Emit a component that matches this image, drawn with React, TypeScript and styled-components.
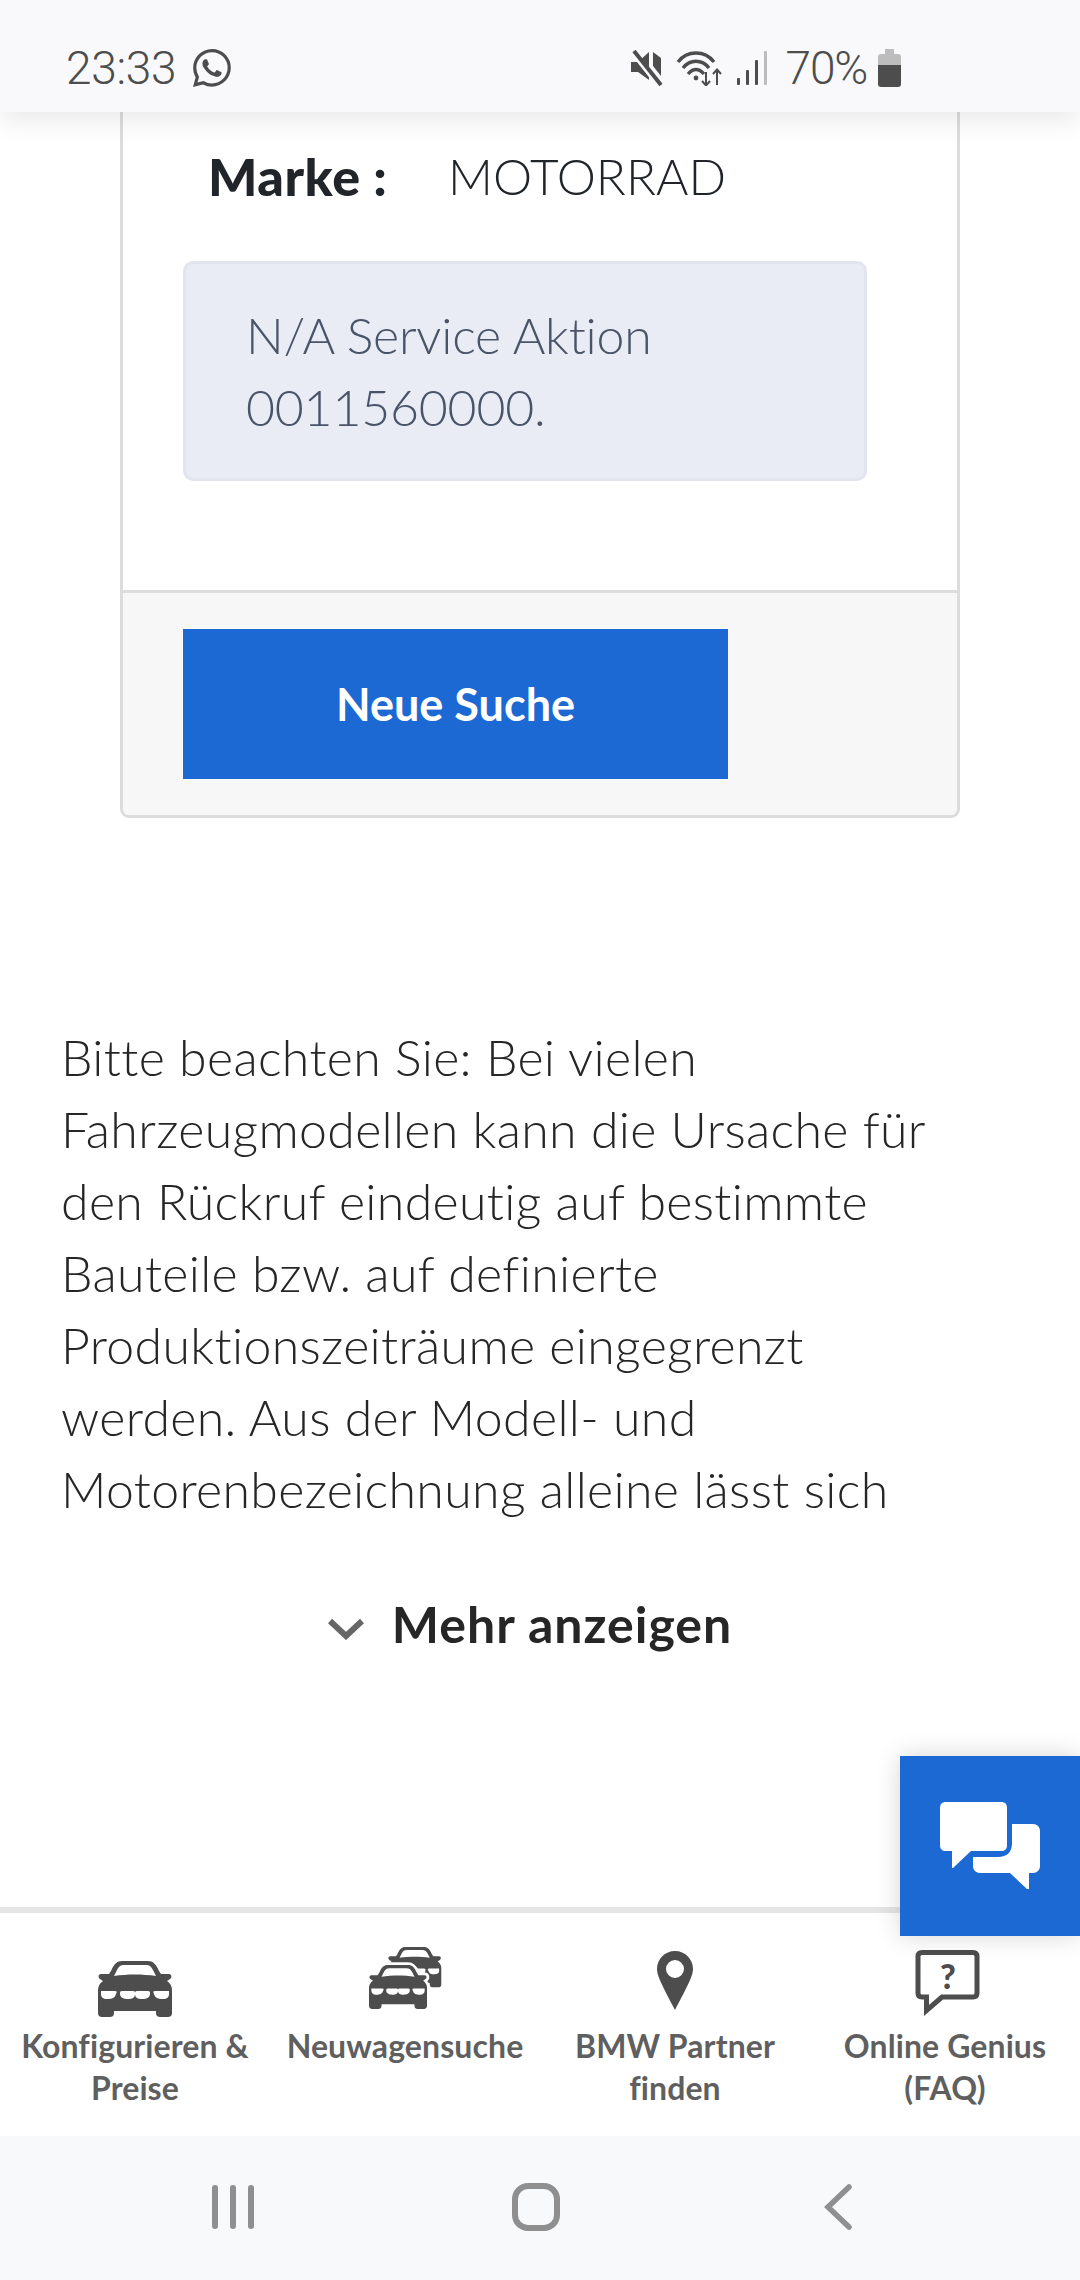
import React from 'react';
import styled, { createGlobalStyle } from 'styled-components';
import { BsWhatsapp } from 'react-icons/bs';

const GlobalStyle = createGlobalStyle`
  * { box-sizing: border-box; }
  html, body { margin: 0; padding: 0; background: #ffffff; }
  body { font-family: Lato, "Noto Sans", sans-serif; color: #212529; }
`;

const Page = styled.div`
  position: relative;
  display: flex;
  flex-direction: column;
  width: 1080px;
  height: 2280px;
  overflow: hidden;
`;

const StatusBar = styled.header`
  position: relative;
  z-index: 2;
  display: flex;
  align-items: center;
  flex: none;
  height: 112px;
  padding: 23px 179px 0 66px;
  background: #f9f9fb;
  color: #4d4d4d;
  box-shadow: 0 6px 28px rgba(0, 0, 0, 0.1);
`;

const StatusText = styled.span`
  font-family: Roboto, sans-serif;
  font-size: 46px;
  font-weight: 300;
  line-height: 44px;
  letter-spacing: -0.3px;
`;

const StatusGroup = styled.div`
  display: flex;
  align-items: center;
  gap: 11px;

  ${StatusText} {
    margin-left: 8px;
    letter-spacing: -1.2px;
  }
`;

const Whatsapp = styled(BsWhatsapp)`
  margin-left: 17px;
  font-size: 38px;
`;

const Spacer = styled.div`
  flex: 1;
`;

const Main = styled.main`
  flex: 1;
  display: flex;
  flex-direction: column;
  min-height: 0;
`;

const Card = styled.section`
  margin: 0 120px;
  border: 3px solid #dcdcdc;
  border-top: 0;
  border-radius: 0 0 9px 9px;
  overflow: hidden;
`;

const CardBody = styled.div`
  height: 478px;
  padding: 30px 60px 0;
`;

const BrandRow = styled.div`
  display: flex;
  align-items: center;
  height: 68px;
  padding-left: 25px;
`;

const BrandLabel = styled.strong`
  width: 240px;
  font-size: 52px;
  font-weight: 900;
  letter-spacing: 0.5px;
  white-space: nowrap;
`;

const BrandValue = styled.span`
  font-size: 49.5px;
  font-weight: 300;
  white-space: nowrap;
`;

const Notice = styled.div`
  width: 684px;
  height: 220px;
  margin-top: 51px;
  padding: 35px 60px 0;
  border: 3px solid #e2e5ef;
  border-radius: 10px;
  background: #e9ecf4;
  color: #4a5468;
  font-size: 50px;
  font-weight: 300;
  letter-spacing: -0.2px;
  line-height: 72px;
`;

const CardFooter = styled.div`
  height: 225px;
  padding: 36px 60px 0;
  border-top: 3px solid #dcdcdc;
  background: #f7f7f7;
`;

const SearchButton = styled.button`
  display: block;
  width: 545px;
  height: 150px;
  padding: 0;
  border: 0;
  background: #1d69d3;
  color: #ffffff;
  font-family: inherit;
  font-size: 45px;
  font-weight: 700;
`;

const Copy = styled.p`
  width: 960px;
  margin: 203px 0 0;
  padding-left: 61px;
  color: #262626;
  font-size: 50px;
  font-weight: 300;
  letter-spacing: 0.35px;
  line-height: 72px;
`;

const MoreRow = styled.div`
  display: flex;
  align-items: center;
  justify-content: center;
  gap: 28px;
  margin-top: 63px;
  padding-right: 20px;
  color: #262626;
  font-size: 50px;
  font-weight: 700;
  letter-spacing: 1px;
  line-height: 72px;

  svg {
    margin-top: 9px;
  }
`;

const BottomNav = styled.nav`
  display: grid;
  grid-template-columns: repeat(4, 270px);
  flex: none;
  height: 229px;
  padding-top: 27px;
  border-top: 6px solid #e5e5e5;
  background: #ffffff;
`;

const NavItem = styled.a`
  display: flex;
  flex-direction: column;
  align-items: center;
`;

const NavIcon = styled.svg`
  display: block;
  width: 100px;
  height: 84px;
  margin-bottom: 1px;
  color: #4d4d4d;
`;

const NavLabel = styled.span`
  color: #5f5f5f;
  font-size: 32px;
  font-weight: 700;
  letter-spacing: 0.1px;
  line-height: 42px;
  text-align: center;
  white-space: pre-line;
`;

const SystemBar = styled.footer`
  display: flex;
  align-items: center;
  justify-content: center;
  flex: none;
  height: 144px;
  padding: 0 8px 2px 0;
  background: #f8f9fb;
  color: #8f8f8f;
`;

const SystemKey = styled.div`
  display: flex;
  align-items: center;
  justify-content: center;
  width: 302px;
`;

const ChatButton = styled.button`
  position: absolute;
  right: 0;
  bottom: 344px;
  z-index: 1;
  display: flex;
  align-items: center;
  justify-content: center;
  width: 180px;
  height: 180px;
  padding: 0;
  border: 0;
  background: #1d69d3;
  box-shadow: 0 0 24px rgba(0, 0, 0, 0.16);
`;

const carBody =
  'M24 0H50C55 0 58 3 61 10L63 13H71C74 13 74 17 72 18L69 20C72 22 74 25 74 29V52C74 55 72 56 70 56H62C60 56 58 55 58 52V50H16V52C16 55 14 56 12 56H4C2 56 0 55 0 52V29C0 25 2 22 5 20L2 18C0 17 0 13 3 13H11L13 10C16 3 19 0 24 0Z';

const CarShape = () => (
  <>
    <path fill="currentColor" d={carBody} />
    <path fill="#fff" d="M16 15L19 9C21 5 23 4 26 4H48C51 4 53 5 55 9L58 15C45 13 29 13 16 15Z" />
    <path fill="#fff" d="M3 30H17C19 30 19 31 18 33C17 37 14 38 9 38C5 38 3 36 3 33Z" />
    <path fill="#fff" d="M71 30H57C55 30 55 31 56 33C57 37 60 38 65 38C69 38 71 36 71 33Z" />
    <path fill="#fff" d="M24 30H35C37 30 37 31 37 33C37 37 34 38 30 38C25 38 22 36 22 33C22 31 22 30 24 30Z" />
    <path fill="#fff" d="M50 30H39C37 30 37 31 37 33C37 37 40 38 44 38C49 38 52 36 52 33C52 31 52 30 50 30Z" />
  </>
);

const SingleCarIcon = () => (
  <NavIcon viewBox="0 0 100 84">
    <g transform="translate(13 21)">
      <CarShape />
    </g>
  </NavIcon>
);

const TwoCarsIcon = () => (
  <NavIcon viewBox="0 0 100 84">
    <g transform="translate(33 7) scale(0.72)">
      <CarShape />
    </g>
    <g transform="translate(14 25) scale(0.784)">
      <path d={carBody} fill="#fff" stroke="#fff" strokeWidth="7" />
      <CarShape />
    </g>
  </NavIcon>
);

const PinIcon = () => (
  <NavIcon viewBox="0 0 100 84">
    <path
      fill="currentColor"
      fillRule="evenodd"
      d="M50 11C60 11 68 19 68 29C68 36 62 47 50 70C38 47 32 36 32 29C32 19 40 11 50 11ZM50 20A9 9 0 1 0 50 38A9 9 0 1 0 50 20Z"
    />
  </NavIcon>
);

const FaqIcon = () => (
  <NavIcon viewBox="0 0 100 84">
    <path
      fill="none"
      stroke="currentColor"
      strokeWidth="5"
      d="M27 12.5H78C80.500 12.500 82 14 82 16.500V53C82 55.500 80.500 57 78 57H47L31.500 70.500V57H27C24.500 57 23 55.500 23 53V16.500C23 14 24.500 12.500 27 12.500Z"
    />
    <text x="53" y="49" textAnchor="middle" fill="currentColor" fontFamily="Lato, sans-serif" fontSize="34" fontWeight="900">
      ?
    </text>
  </NavIcon>
);

const navItems = [
  { label: 'Konfigurieren &\nPreise', icon: <SingleCarIcon /> },
  { label: 'Neuwagensuche', icon: <TwoCarsIcon /> },
  { label: 'BMW Partner\nfinden', icon: <PinIcon /> },
  { label: 'Online Genius\n(FAQ)', icon: <FaqIcon /> },
];

export default function App() {
  return (
    <Page>
      <GlobalStyle />
      <StatusBar>
        <StatusText>23:33</StatusText>
        <Whatsapp />
        <Spacer />
        <StatusGroup>
          <svg width="36" height="36" viewBox="0 0 36 36" fill="#4d4d4d">
            <path d="M2 12H9L20 2V30L9 22H2Z" />
            <path d="M3 1L30 35" stroke="#f9f9fb" strokeWidth="6" />
            <path d="M5 1L32 35" stroke="#4d4d4d" strokeWidth="4" />
            <path d="M24 2V16L32 26V8Z" />
          </svg>
          <svg width="48" height="36" viewBox="0 0 48 36" fill="none" stroke="#4d4d4d" strokeWidth="3.4">
            <path d="M2 12C11 0 29 0 38 12" />
            <path d="M7 18C14 9 26 9 33 18" />
            <path d="M12 24C17 18 23 18 28 24" />
            <circle cx="20" cy="28" r="2.400" fill="#4d4d4d" stroke="none" />
            <path d="M30 22V35M26 31L30 35.500L34 31" strokeWidth="2" />
            <path d="M41 35V20M37 24L41 19.500L45 24" strokeWidth="2" />
          </svg>
          <svg width="32" height="36" viewBox="0 0 32 36">
            <rect x="2" y="28" width="3" height="7" rx="1" fill="#4d4d4d" />
            <rect x="11" y="20" width="3" height="15" rx="1" fill="#4d4d4d" />
            <rect x="20" y="10" width="3" height="25" rx="1" fill="#4d4d4d" />
            <rect x="29" y="1" width="3" height="34" rx="1" fill="#bdbdbd" />
          </svg>
          <StatusText>70%</StatusText>
          <svg width="23" height="38" viewBox="0 0 23 38">
            <path fill="#bdbdbd" d="M7 0H16V5H20C22 5 23 6 23 8V16H0V8C0 6 1 5 3 5H7Z" />
            <path fill="#4d4d4d" d="M0 16H23V35C23 37 22 38 20 38H3C1 38 0 37 0 35Z" />
          </svg>
        </StatusGroup>
      </StatusBar>
      <Main>
        <Card>
          <CardBody>
            <BrandRow>
              <BrandLabel>Marke :</BrandLabel>
              <BrandValue>MOTORRAD</BrandValue>
            </BrandRow>
            <Notice>N/A Service Aktion 0011560000.</Notice>
          </CardBody>
          <CardFooter>
            <SearchButton>Neue Suche</SearchButton>
          </CardFooter>
        </Card>
        <Copy>
          Bitte beachten Sie: Bei vielen Fahrzeugmodellen kann die Ursache für den Rückruf eindeutig auf bestimmte
          Bauteile bzw. auf definierte Produktionszeiträume eingegrenzt werden. Aus der Modell- und
          Motorenbezeichnung alleine lässt sich
        </Copy>
        <MoreRow>
          <svg width="36" height="22" viewBox="0 0 36 22" fill="none" stroke="#666666" strokeWidth="6">
            <path d="M2 3L18 18L34 3" />
          </svg>
          Mehr anzeigen
        </MoreRow>
      </Main>
      <BottomNav>
        {navItems.map((item) => (
          <NavItem key={item.label}>
            {item.icon}
            <NavLabel>{item.label}</NavLabel>
          </NavItem>
        ))}
      </BottomNav>
      <SystemBar>
        <SystemKey>
          <svg width="44" height="46" viewBox="0 0 44 46" fill="currentColor">
            <rect x="0" y="1" width="6" height="44" rx="3" />
            <rect x="18" y="1" width="6" height="44" rx="3" />
            <rect x="36" y="1" width="6" height="44" rx="3" />
          </svg>
        </SystemKey>
        <SystemKey>
          <svg width="48" height="48" viewBox="0 0 48 48" fill="none" stroke="currentColor" strokeWidth="6">
            <rect x="3" y="3" width="42" height="42" rx="13" />
          </svg>
        </SystemKey>
        <SystemKey>
          <svg width="28" height="46" viewBox="0 0 28 46" fill="none" stroke="currentColor" strokeWidth="5.500" strokeLinecap="round">
            <path d="M25 3L4 23L25 43" />
          </svg>
        </SystemKey>
      </SystemBar>
      <ChatButton aria-label="Chat">
        <svg width="100" height="88" viewBox="0 0 100 88">
          <path
            fill="#fff"
            d="M6 0H61C65 0 67 2 67 6V43C67 47 65 49 61 49H31L13 66H12V49H6C2 49 0 47 0 43V6C0 2 2 0 6 0Z"
          />
          <path
            fill="#fff"
            d="M72 22H93C97 22 100 25 100 29V64C100 68 97 71 93 71H89V87H87L70 71H40C36 71 33 68 33 64V55H58C67 55 72 50 72 41Z"
          />
        </svg>
      </ChatButton>
    </Page>
  );
}
